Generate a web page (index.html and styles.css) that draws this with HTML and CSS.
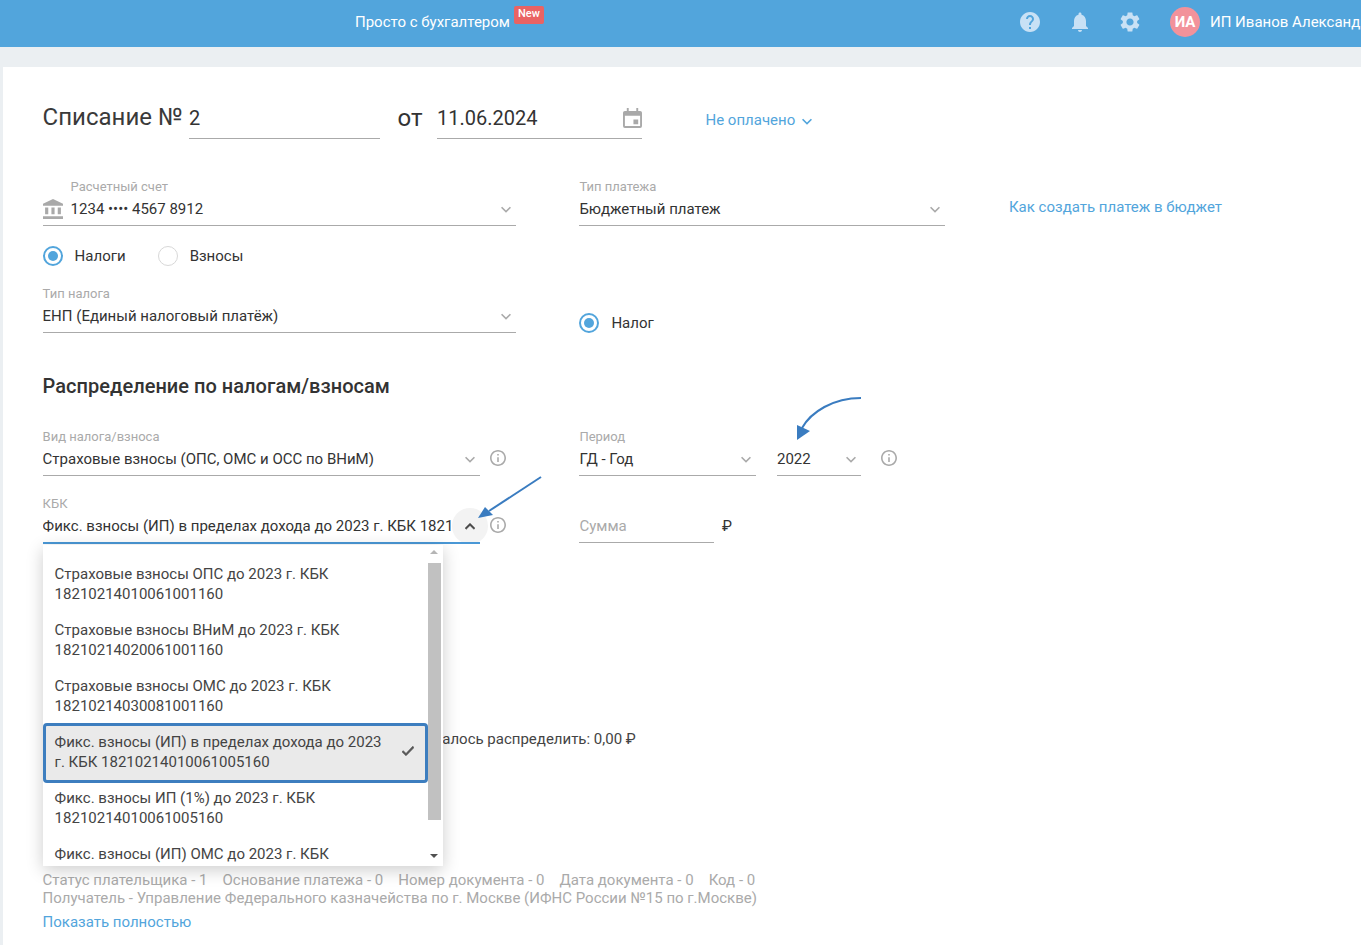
FILE: index.html
```html
<!DOCTYPE html>
<html lang="ru">
<head>
<meta charset="utf-8">
<title>Списание</title>
<link rel="stylesheet" href="styles.css">
</head>
<body>
<header class="topbar">
  <div class="promo"><span>Просто с бухгалтером</span><span class="badge">New</span></div>
  <div class="top-actions">
    <svg class="top-icon" viewBox="0 0 24 24"><path d="M12 2C6.48 2 2 6.48 2 12s4.48 10 10 10 10-4.48 10-10S17.52 2 12 2zm1 17h-2v-2h2v2zm2.07-7.75l-.9.92C13.45 12.9 13 13.5 13 15h-2v-.5c0-1.1.45-2.1 1.17-2.83l1.24-1.26c.37-.36.59-.86.59-1.41 0-1.1-.9-2-2-2s-2 .9-2 2H8c0-2.21 1.79-4 4-4s4 1.79 4 4c0 .88-.36 1.68-.93 2.25z"/></svg>
    <svg class="top-icon" viewBox="0 0 24 24"><path d="M12 22c1.1 0 2-.9 2-2h-4c0 1.1.9 2 2 2zm6-6v-5c0-3.07-1.63-5.64-4.5-6.32V4c0-.83-.67-1.5-1.5-1.5s-1.5.67-1.5 1.5v.68C7.64 5.36 6 7.92 6 11v5l-2 2v1h16v-1l-2-2z"/></svg>
    <svg class="top-icon" viewBox="0 0 24 24"><path d="M19.14 12.94c.04-.3.06-.61.06-.94 0-.32-.02-.64-.07-.94l2.03-1.58c.18-.14.23-.41.12-.61l-1.92-3.32c-.12-.22-.37-.29-.59-.22l-2.39.96c-.5-.38-1.03-.7-1.62-.94l-.36-2.54c-.04-.24-.24-.41-.48-.41h-3.84c-.24 0-.43.17-.47.41l-.36 2.54c-.59.24-1.13.57-1.62.94l-2.39-.96c-.22-.08-.47 0-.59.22L2.74 8.87c-.12.21-.08.47.12.61l2.03 1.58c-.05.3-.09.63-.09.94s.02.64.07.94l-2.03 1.58c-.18.14-.23.41-.12.61l1.92 3.32c.12.22.37.29.59.22l2.39-.96c.5.38 1.03.7 1.62.94l.36 2.54c.05.24.24.41.48.41h3.84c.24 0 .44-.17.47-.41l.36-2.54c.59-.24 1.13-.56 1.62-.94l2.39.96c.22.08.47 0 .59-.22l1.92-3.32c.12-.22.07-.47-.12-.61l-2.01-1.58zM12 15.6c-1.98 0-3.6-1.62-3.6-3.6s1.62-3.6 3.6-3.6 3.6 1.62 3.6 3.6-1.62 3.6-3.6 3.6z"/></svg>
    <div class="avatar">ИА</div>
    <div class="user-name">ИП Иванов Александр</div>
  </div>
</header>

<div class="canvas">
<main class="card">
  <div class="doc-row">
    <h1 class="doc-title">Списание №</h1>
    <div class="doc-input doc-number">2</div>
    <div class="doc-from">от</div>
    <div class="doc-input doc-date"><span>11.06.2024</span>
      <svg class="cal-icon" viewBox="0 0 20 21"><path d="M4 0h2v3h8V0h2v3h2a2 2 0 0 1 2 2v14a2 2 0 0 1-2 2H2a2 2 0 0 1-2-2V5a2 2 0 0 1 2-2h2zM2 8v11h16V8zm9 4h5v5h-5z"/></svg>
    </div>
    <div class="doc-status">Не оплачено
      <svg class="chev chev-blue" viewBox="0 0 12 8"><path d="M1.4 .6 6 5.200 10.600 .6 12 2l-6 6-6-6z"/></svg>
    </div>
  </div>

  <div class="row row-account">
    <div class="field w-473">
      <label class="field-label indent">Расчетный счет</label>
      <div class="field-value">
        <svg class="bank-icon" viewBox="2 1 19 21" preserveAspectRatio="none"><path d="M4 10v7h3v-7H4zm6 0v7h3v-7h-3zM2 22h19v-3H2v3zm14-12v7h3v-7h-3zm-4.500-9L2 6v2h19V6l-9.500-5z"/></svg>
        <span class="value-text">1234 •••• 4567 8912</span>
        <svg class="chev" viewBox="0 0 12 8"><path d="M1.400 .6 6 5.200 10.600 .6 12 2l-6 6-6-6z"/></svg>
      </div>
    </div>
    <div class="field w-366">
      <label class="field-label">Тип платежа</label>
      <div class="field-value">
        <span class="value-text">Бюджетный платеж</span>
        <svg class="chev" viewBox="0 0 12 8"><path d="M1.400 .6 6 5.200 10.600 .6 12 2l-6 6-6-6z"/></svg>
      </div>
    </div>
    <a class="help-link">Как создать платеж в бюджет</a>
  </div>

  <div class="row radios">
    <div class="radio on">Налоги</div>
    <div class="radio">Взносы</div>
  </div>

  <div class="row row-tax">
    <div class="field w-473">
      <label class="field-label">Тип налога</label>
      <div class="field-value">
        <span class="value-text">ЕНП (Единый налоговый платёж)</span>
        <svg class="chev" viewBox="0 0 12 8"><path d="M1.400 .6 6 5.200 10.600 .6 12 2l-6 6-6-6z"/></svg>
      </div>
    </div>
    <div class="radio on radio-end">Налог</div>
  </div>

  <h2 class="section-title">Распределение по налогам/взносам</h2>

  <div class="row row-kind">
    <div class="field w-437">
      <label class="field-label">Вид налога/взноса</label>
      <div class="field-value">
        <span class="value-text">Страховые взносы (ОПС, ОМС и ОСС по ВНиМ)</span>
        <svg class="chev" viewBox="0 0 12 8"><path d="M1.400 .6 6 5.200 10.600 .6 12 2l-6 6-6-6z"/></svg>
      </div>
    </div>
    <svg class="info" viewBox="2 2 20 20"><path d="M11 7h2v2h-2zm0 4h2v6h-2zm1-9C6.480 2 2 6.480 2 12s4.480 10 10 10 10-4.480 10-10S17.520 2 12 2zm0 18c-4.410 0-8-3.590-8-8s3.590-8 8-8 8 3.590 8 8-3.590 8-8 8z"/></svg>
    <div class="field w-177 gap-73">
      <label class="field-label">Период</label>
      <div class="field-value">
        <span class="value-text">ГД - Год</span>
        <svg class="chev" viewBox="0 0 12 8"><path d="M1.400 .6 6 5.200 10.600 .6 12 2l-6 6-6-6z"/></svg>
      </div>
    </div>
    <div class="field w-84 gap-21">
      <div class="field-value nolabel">
        <span class="value-text">2022</span>
        <svg class="chev" viewBox="0 0 12 8"><path d="M1.400 .6 6 5.200 10.600 .6 12 2l-6 6-6-6z"/></svg>
      </div>
    </div>
    <svg class="info gap-20" viewBox="2 2 20 20"><path d="M11 7h2v2h-2zm0 4h2v6h-2zm1-9C6.480 2 2 6.480 2 12s4.480 10 10 10 10-4.480 10-10S17.520 2 12 2zm0 18c-4.410 0-8-3.590-8-8s3.590-8 8-8 8 3.590 8 8-3.590 8-8 8z"/></svg>
  </div>

  <div class="row row-kbk">
    <div class="field w-437 focused">
      <label class="field-label">КБК</label>
      <div class="field-value">
        <span class="value-text clip">Фикс. взносы (ИП) в пределах дохода до 2023 г. КБК 18210214010061005160</span>
      </div>
      <div class="chev-circle">
        <svg class="chev chev-dark" viewBox="0 0 12 8"><path d="M1.400 7.400 6 2.800 10.600 7.400 12 6 6 0 0 6z"/></svg>
      </div>
      <div class="dropdown">
        <ul class="options">
          <li class="option">Страховые взносы ОПС до 2023 г. КБК 18210214010061001160</li>
          <li class="option">Страховые взносы ВНиМ до 2023 г. КБК 18210214020061001160</li>
          <li class="option">Страховые взносы ОМС до 2023 г. КБК 18210214030081001160</li>
          <li class="option selected"><span>Фикс. взносы (ИП) в пределах дохода до 2023 г. КБК 18210214010061005160</span>
            <svg class="check" viewBox="0 0 14 11"><path d="M4.700 8.400 1.400 5.100 0 6.500l4.700 4.500L14 1.500 12.600 0z"/></svg>
          </li>
          <li class="option">Фикс. взносы ИП (1%) до 2023 г. КБК 18210214010061005160</li>
          <li class="option">Фикс. взносы (ИП) ОМС до 2023 г. КБК 18210214030081005160</li>
        </ul>
        <div class="scrollbar">
          <span class="sb-arrow sb-up"></span>
          <span class="sb-thumb"></span>
          <span class="sb-arrow sb-down"></span>
        </div>
      </div>
    </div>
    <svg class="info" viewBox="2 2 20 20"><path d="M11 7h2v2h-2zm0 4h2v6h-2zm1-9C6.480 2 2 6.480 2 12s4.480 10 10 10 10-4.480 10-10S17.520 2 12 2zm0 18c-4.410 0-8-3.590-8-8s3.590-8 8-8 8 3.590 8 8-3.590 8-8 8z"/></svg>
    <div class="field w-135 gap-73">
      <div class="field-value nolabel"><span class="value-text placeholder">Сумма</span></div>
    </div>
    <div class="currency">₽</div>
  </div>

  <div class="remainder">Осталось распределить: 0,00 ₽</div>

  <div class="details">
    <div class="details-line"><span>Статус плательщика - 1</span><span>Основание платежа - 0</span><span>Номер документа - 0</span><span>Дата документа - 0</span><span>Код - 0</span></div>
    <div>Получатель - Управление Федерального казначейства по г. Москве (ИФНС России №15 по г.Москве)</div>
  </div>
  <a class="show-all">Показать полностью</a>

  <svg class="arrows" viewBox="0 0 1358 878" width="1358" height="878">
    <path class="arrow-line" d="M858 331C830 331 808 345 799 361"/>
    <path class="arrow-head" d="M794 373 794 358 807 364z"/>
    <path class="arrow-line" d="M538 410 486 444"/>
    <path class="arrow-head" d="M475 451 482 440 490 448z"/>
  </svg>
</main>
</div>
</body>
</html>
```

FILE: styles.css
```css
*, *::before, *::after { box-sizing: border-box; }
html, body { margin: 0; padding: 0; height: 945px; overflow: hidden; }
body { font-family: Roboto, "Liberation Sans", sans-serif; font-size: 15px; color: #333; background: #ebeff2; }

.topbar { height: 47px; background: #52a5dc; display: flex; align-items: center; padding: 0 0 3px 355px; color: #fff; overflow: hidden; }
.promo { display: flex; align-items: flex-start; width: 663px; flex: none; position: relative; font-size: 15px; line-height: 20px; }
.badge { position: absolute; left: 159px; top: -6px; height: 18px; padding: 0 4px; background: #ea6363; border-radius: 2px; font-size: 11px; line-height: 15px; font-weight: 500; }
.top-actions { display: flex; align-items: center; flex: none; white-space: nowrap; }
.top-icon { width: 24px; height: 24px; fill: #c8e1f5; margin-right: 26px; flex: none; }
.avatar { width: 30px; height: 30px; margin-left: 2px; border-radius: 50%; background: #f2929b; color: #fff; font-weight: 700; font-size: 15px; line-height: 30px; text-align: center; flex: none; }
.user-name { margin-left: 10px; font-size: 15px; color: #fff; }

.canvas { padding: 20px 0 0 3px; }
.card { position: relative; height: 878px; background: #fff; padding: 33px 0 0 39.6px; }

.doc-row { display: flex; align-items: flex-end; height: 39px; }
.doc-title { margin: 0 0 4px; font-size: 24px; font-weight: 400; line-height: 34px; width: 146.4px; height: 35px; white-space: nowrap; color: #3a3a3a; }
.doc-input { font-size: 20px; line-height: 30px; height: 39px; padding-top: 3px; border-bottom: 1px solid #aaa; flex: none; }
.doc-number { width: 191px; }
.doc-from { width: 57px; padding-left: 3px; margin-bottom: 3px; text-align: center; font-size: 24px; line-height: 34px; height: 35px; }
.doc-date { width: 205px; display: flex; justify-content: space-between; }
.cal-icon { width: 19px; height: 20px; fill: #a9a9a9; margin-top: 5px; }
.doc-status { margin: 0 0 5px 63.5px; color: #52a5dc; font-size: 15px; line-height: 20px; height: 28px; display: flex; gap: 6.5px; align-items: center; white-space: nowrap; }

.row { display: flex; }
.row-account { margin-top: 40px; position: relative; }
.radios { margin-top: 20px; height: 20px; gap: 32px; }
.row-tax { margin-top: 20px; gap: 63.8px; }
.row-kind { margin-top: 31px; }
.row-kbk { margin-top: 20px; }

.field { position: relative; flex: none; border-bottom: 1px solid #aaa; height: 47px; }
.w-473 { width: 473px; }
.w-366 { width: 366px; margin-left: 63.8px; }
.w-437 { width: 437px; }
.w-177 { width: 177px; }
.w-84 { width: 84px; }
.w-135 { width: 135px; }
.gap-73 { margin-left: 73.8px; }
.gap-21 { margin-left: 20.6px; }
.gap-20 { margin-left: 20px; }

.field-label { display: block; height: 14px; font-size: 13px; line-height: 16px; color: #aaa; white-space: nowrap; }
.indent { padding-left: 28px; }
.field-value { height: 32px; display: flex; align-items: center; justify-content: space-between; padding-right: 5px; }
.nolabel { margin-top: 14px; }
.value-text { font-size: 15px; line-height: 20px; white-space: nowrap; flex: 1; }
.clip { overflow: hidden; flex: none; width: 410px; }
.placeholder { color: #aaa; }
.bank-icon { width: 20px; height: 20px; fill: #a9a9a9; margin-right: 8px; flex: none; }
.chev { width: 10px; height: 7px; fill: #aaa; flex: none; }
.chev-blue { fill: #52a5dc; margin-top: 2px; }
.chev-dark { fill: #444; stroke: #444; stroke-width: .6; }
.chev-circle { position: absolute; left: 409px; top: 12px; width: 36px; height: 36px; border-radius: 50%; background: #f3f3f3; display: flex; align-items: center; justify-content: center; }

.focused { border-bottom: 0; }
.focused::after { content: ""; position: absolute; z-index: 1; left: 0; right: 0; top: 46px; height: 2px; background: #4a98d6; }
.help-link { margin: 21px 0 0 63.6px; color: #52a5dc; font-size: 15px; line-height: 14px; height: 14px; white-space: nowrap; }

.radio { position: relative; padding-left: 32px; line-height: 20px; font-size: 15px; height: 20px; white-space: nowrap; }
.radio::before { content: ""; position: absolute; left: 0; top: 0; width: 20px; height: 20px; border-radius: 50%; border: 1px solid #d8d8d8; background: #fff; }
.radio.on::before { border: 2px solid #52a5dc; }
.radio.on::after { content: ""; position: absolute; left: 5px; top: 5px; width: 10px; height: 10px; border-radius: 50%; background: #52a5dc; }
.radio-end { align-self: flex-end; }

.section-title { margin: 41px 0 0; font-size: 20px; line-height: 24px; font-weight: 500; color: #333; letter-spacing: .03px; }

.info { width: 16px; height: 16px; fill: #aaa; flex: none; margin: 21px 0 0 10px; }
.info.gap-20 { margin-left: 20px; }

.currency { margin: 20px 0 0 7.6px; font-size: 15px; line-height: 20px; }

.dropdown { position: absolute; z-index: 2; left: 0; top: 49px; width: 400px; height: 321px; background: #fff; box-shadow: 0 4px 16px rgba(0,0,0,.2); display: flex; overflow: hidden; }
.options { list-style: none; margin: 0; padding: 11px 0 0; width: 385px; flex: none; color: #444; }
.option { height: 56px; padding: 8px 30px 8px 12px; font-size: 15px; line-height: 20px; }
.option.selected { position: relative; height: 60px; margin: -1px 0 -3px; padding: 6px 30px 6px 9px; border: 3px solid #3d7ebf; border-radius: 4px; background: #eaeaea; }
.check { position: absolute; right: 11px; top: 20px; width: 12px; height: 10px; fill: #555; stroke: #555; stroke-width: .8; }
.scrollbar { width: 15px; flex: none; display: flex; flex-direction: column; align-items: flex-start; padding-top: 5px; }
.sb-arrow { width: 0; height: 0; margin-left: 2.5px; border-left: 4px solid transparent; border-right: 4px solid transparent; flex: none; }
.sb-up { border-bottom: 4px solid #b5b5b5; }
.sb-thumb { width: 13px; height: 257px; background: #c1c1c1; margin-top: 9px; flex: none; }
.sb-down { border-top: 4px solid #505050; margin-top: 34px; }

.remainder { margin: 186px 0 0 374.4px; line-height: 20px; font-size: 15px; height: 20px; white-space: nowrap; color: #444; }
.details { margin-top: 122px; color: #aaa; font-size: 15px; line-height: 18px; white-space: nowrap; }
.details-line { display: flex; gap: 15px; }
.show-all { display: block; margin-top: 6px; color: #52a5dc; font-size: 15px; line-height: 18px; }

.arrows { position: absolute; left: 0; top: 0; z-index: 3; pointer-events: none; }
.arrow-line { fill: none; stroke: #3a7cc0; stroke-width: 2; }
.arrow-head { fill: #3a7cc0; }
```
